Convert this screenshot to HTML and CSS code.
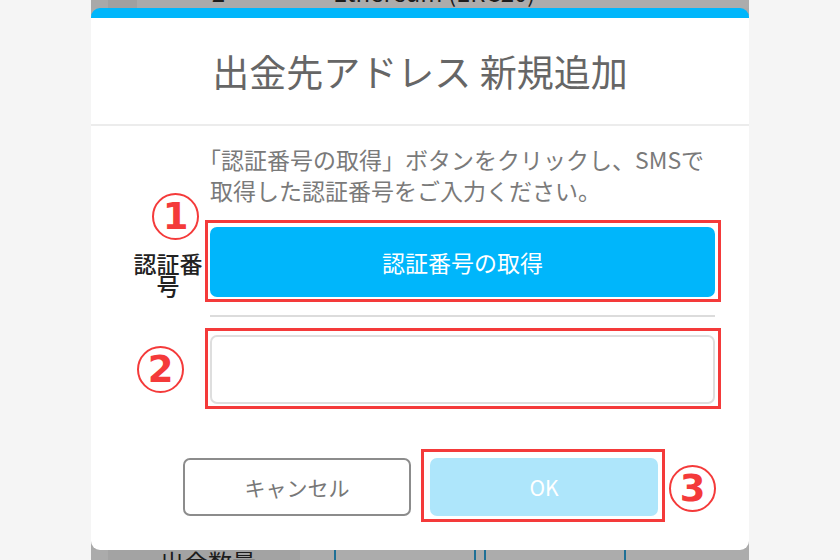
FILE: index.html
```html
<!DOCTYPE html>
<html lang="ja">
<head>
    <meta charset="UTF-8">
    <meta name="viewport" content="width=device-width, initial-scale=1.0">
    <title>出金先アドレス 新規追加</title>
    <link rel="stylesheet" href="styles.css">
</head>
<body>

<div class="screen">
    <!-- 背景の一覧（上） -->
    <div class="peek peek-top">
        <div class="cell cell-a"></div>
        <div class="cell cell-b">2</div>
        <div class="cell cell-c">Ethereum (ERC20)</div>
    </div>

    <div class="dialog">
        <div class="dialog-head">
            <h2>出金先アドレス 新規追加</h2>
        </div>

        <div class="dialog-body">
            <p class="note">「認証番号の取得」ボタンをクリックし、SMSで取得した認証番号をご入力ください。</p>

            <div class="field-row">
                <div class="field-label">認証番号</div>
                <div class="field-main">
                    <div class="mark">
                        <button class="btn-code">認証番号の取得</button>
                    </div>
                    <span class="step step-1">1</span>
                    <div class="rule"></div>
                    <div class="mark mark-input">
                        <input class="code-input" type="text">
                    </div>
                    <span class="step step-2">2</span>
                </div>
            </div>
        </div>

        <div class="dialog-foot">
            <button class="btn-cancel">キャンセル</button>
            <div class="mark mark-ok">
                <button class="btn-ok">OK</button>
                <span class="step step-3">3</span>
            </div>
        </div>
    </div>

    <!-- 背景の一覧（下） -->
    <div class="peek peek-bottom">
        <div class="cell cell-d"></div>
        <div class="cell cell-e">出金数量</div>
        <div class="cell cell-f">
            <span class="amount-box"></span>
            <span class="amount-box"></span>
        </div>
    </div>
</div>

</body>
</html>
```

FILE: styles.css
```css
body {
    margin: 0;
    background-color: #f5f5f5;
    font-family: "Noto Sans CJK JP", "Noto Sans", sans-serif;
    color: #333;
}
.screen {
    width: 658px;
    height: 560px;
    margin: 0 auto;
    background-color: #aaaaaa;
    overflow: hidden;
    display: flex;
    flex-direction: column;
}

/* 背景の一覧 */
.peek {
    display: flex;
    overflow: hidden;
    flex: none;
}
.peek-top {
    height: 8px;
}
.peek-bottom {
    height: 10px;
}
.cell {
    font-size: 24px;
    line-height: 24px;
    color: #1c1c1c;
    white-space: nowrap;
}
.cell-a {
    width: 17px;
    background-color: #a9a9a9;
}
.peek-top .cell-a {
    width: 46px;
    background: linear-gradient(to right, #a9a9a9 17px, #a0a0a0 17px);
}
.cell-b {
    width: 163px;
    text-align: center;
    margin-top: -20px;
    background-color: #aaaaaa;
}
.cell-c {
    flex: 1;
    padding-left: 33px;
    margin-top: -20px;
    background-color: #acacac;
}
.cell-d {
    width: 17px;
    background-color: #ababab;
}
.cell-e {
    width: 192px;
    padding-left: 52px;
    box-sizing: border-box;
    background-color: #a3a3a3;
    margin-top: 0;
}
.cell-f {
    flex: 1;
    display: flex;
    gap: 8px;
    padding-left: 34px;
    background-color: #acacac;
}
.amount-box {
    width: 138px;
    height: 30px;
    margin-top: -6px;
    border: 2px solid #1f7096;
    border-radius: 6px;
}

/* ダイアログ */
.dialog {
    height: 542px;
    box-sizing: border-box;
    background-color: #ffffff;
    border-top: 10px solid #00b6fb;
    border-radius: 9px;
    display: flex;
    flex-direction: column;
    flex: none;
}
.dialog-head {
    height: 106px;
    border-bottom: 2px solid #ececec;
    display: flex;
    align-items: center;
    justify-content: center;
}
.dialog-head h2 {
    margin: 0;
    font-size: 37px;
    font-weight: 400;
    color: #666;
}
.dialog-body {
    padding: 18px 28px 0 42px;
}
.note {
    margin: 0 0 0 77px;
    font-size: 23px;
    line-height: 31px;
    color: #7a7a7a;
    text-indent: -12px;
}
.field-row {
    display: flex;
    margin-top: 14px;
}
.field-label {
    width: 70px;
    margin: 32px 2px 0 0;
    font-size: 23px;
    line-height: 22px;
    font-weight: 500;
    color: #222;
    text-align: center;
}
.field-main {
    flex: 1;
    position: relative;
    display: flex;
    flex-direction: column;
}
.btn-code {
    width: 100%;
    height: 70px;
    border: none;
    border-radius: 7px;
    background-color: #00b6fb;
    color: #fff;
    font-family: inherit;
    font-size: 23px;
}
.rule {
    height: 2px;
    margin: 13px 6px 0 5px;
    background-color: #dcdcdc;
}
.code-input {
    display: block;
    width: 100%;
    height: 69px;
    box-sizing: border-box;
    border: 2px solid #dedede;
    border-radius: 7px;
    background-color: #fff;
}

/* 注釈の赤枠と番号 */
.mark {
    border: 3px solid #f43a3a;
    padding: 4px 3px 2px 2px;
}
.mark-input {
    margin-top: 11px;
}
.mark-ok {
    position: relative;
    padding: 6px 4px 3px 6px;
}
.step {
    position: absolute;
    width: 43px;
    height: 43px;
    border: 2px solid #f43a3a;
    border-radius: 50%;
    background-color: #fff;
    color: #f43a3a;
    font-family: "DejaVu Sans", sans-serif;
    font-size: 37px;
    font-weight: bold;
    line-height: 43px;
    text-align: center;
}
.step-1 {
    left: -53px;
    top: -27px;
}
.step-2 {
    left: -68px;
    top: 126px;
}
.step-3 {
    left: calc(100% + 7px);
    top: 13px;
}

.dialog-foot {
    display: flex;
    align-items: flex-start;
    gap: 10px;
    padding-left: 92px;
    margin-top: 40px;
}
.btn-cancel,
.btn-ok {
    width: 228px;
    height: 58px;
    border-radius: 7px;
    font-family: inherit;
    font-size: 21px;
}
.btn-cancel {
    margin-top: 9px;
    border: 2px solid #8c8c8c;
    background-color: #fff;
    color: #777;
}
.btn-ok {
    display: block;
    border: none;
    background-color: #aee6fb;
    color: #fff;
}
```
